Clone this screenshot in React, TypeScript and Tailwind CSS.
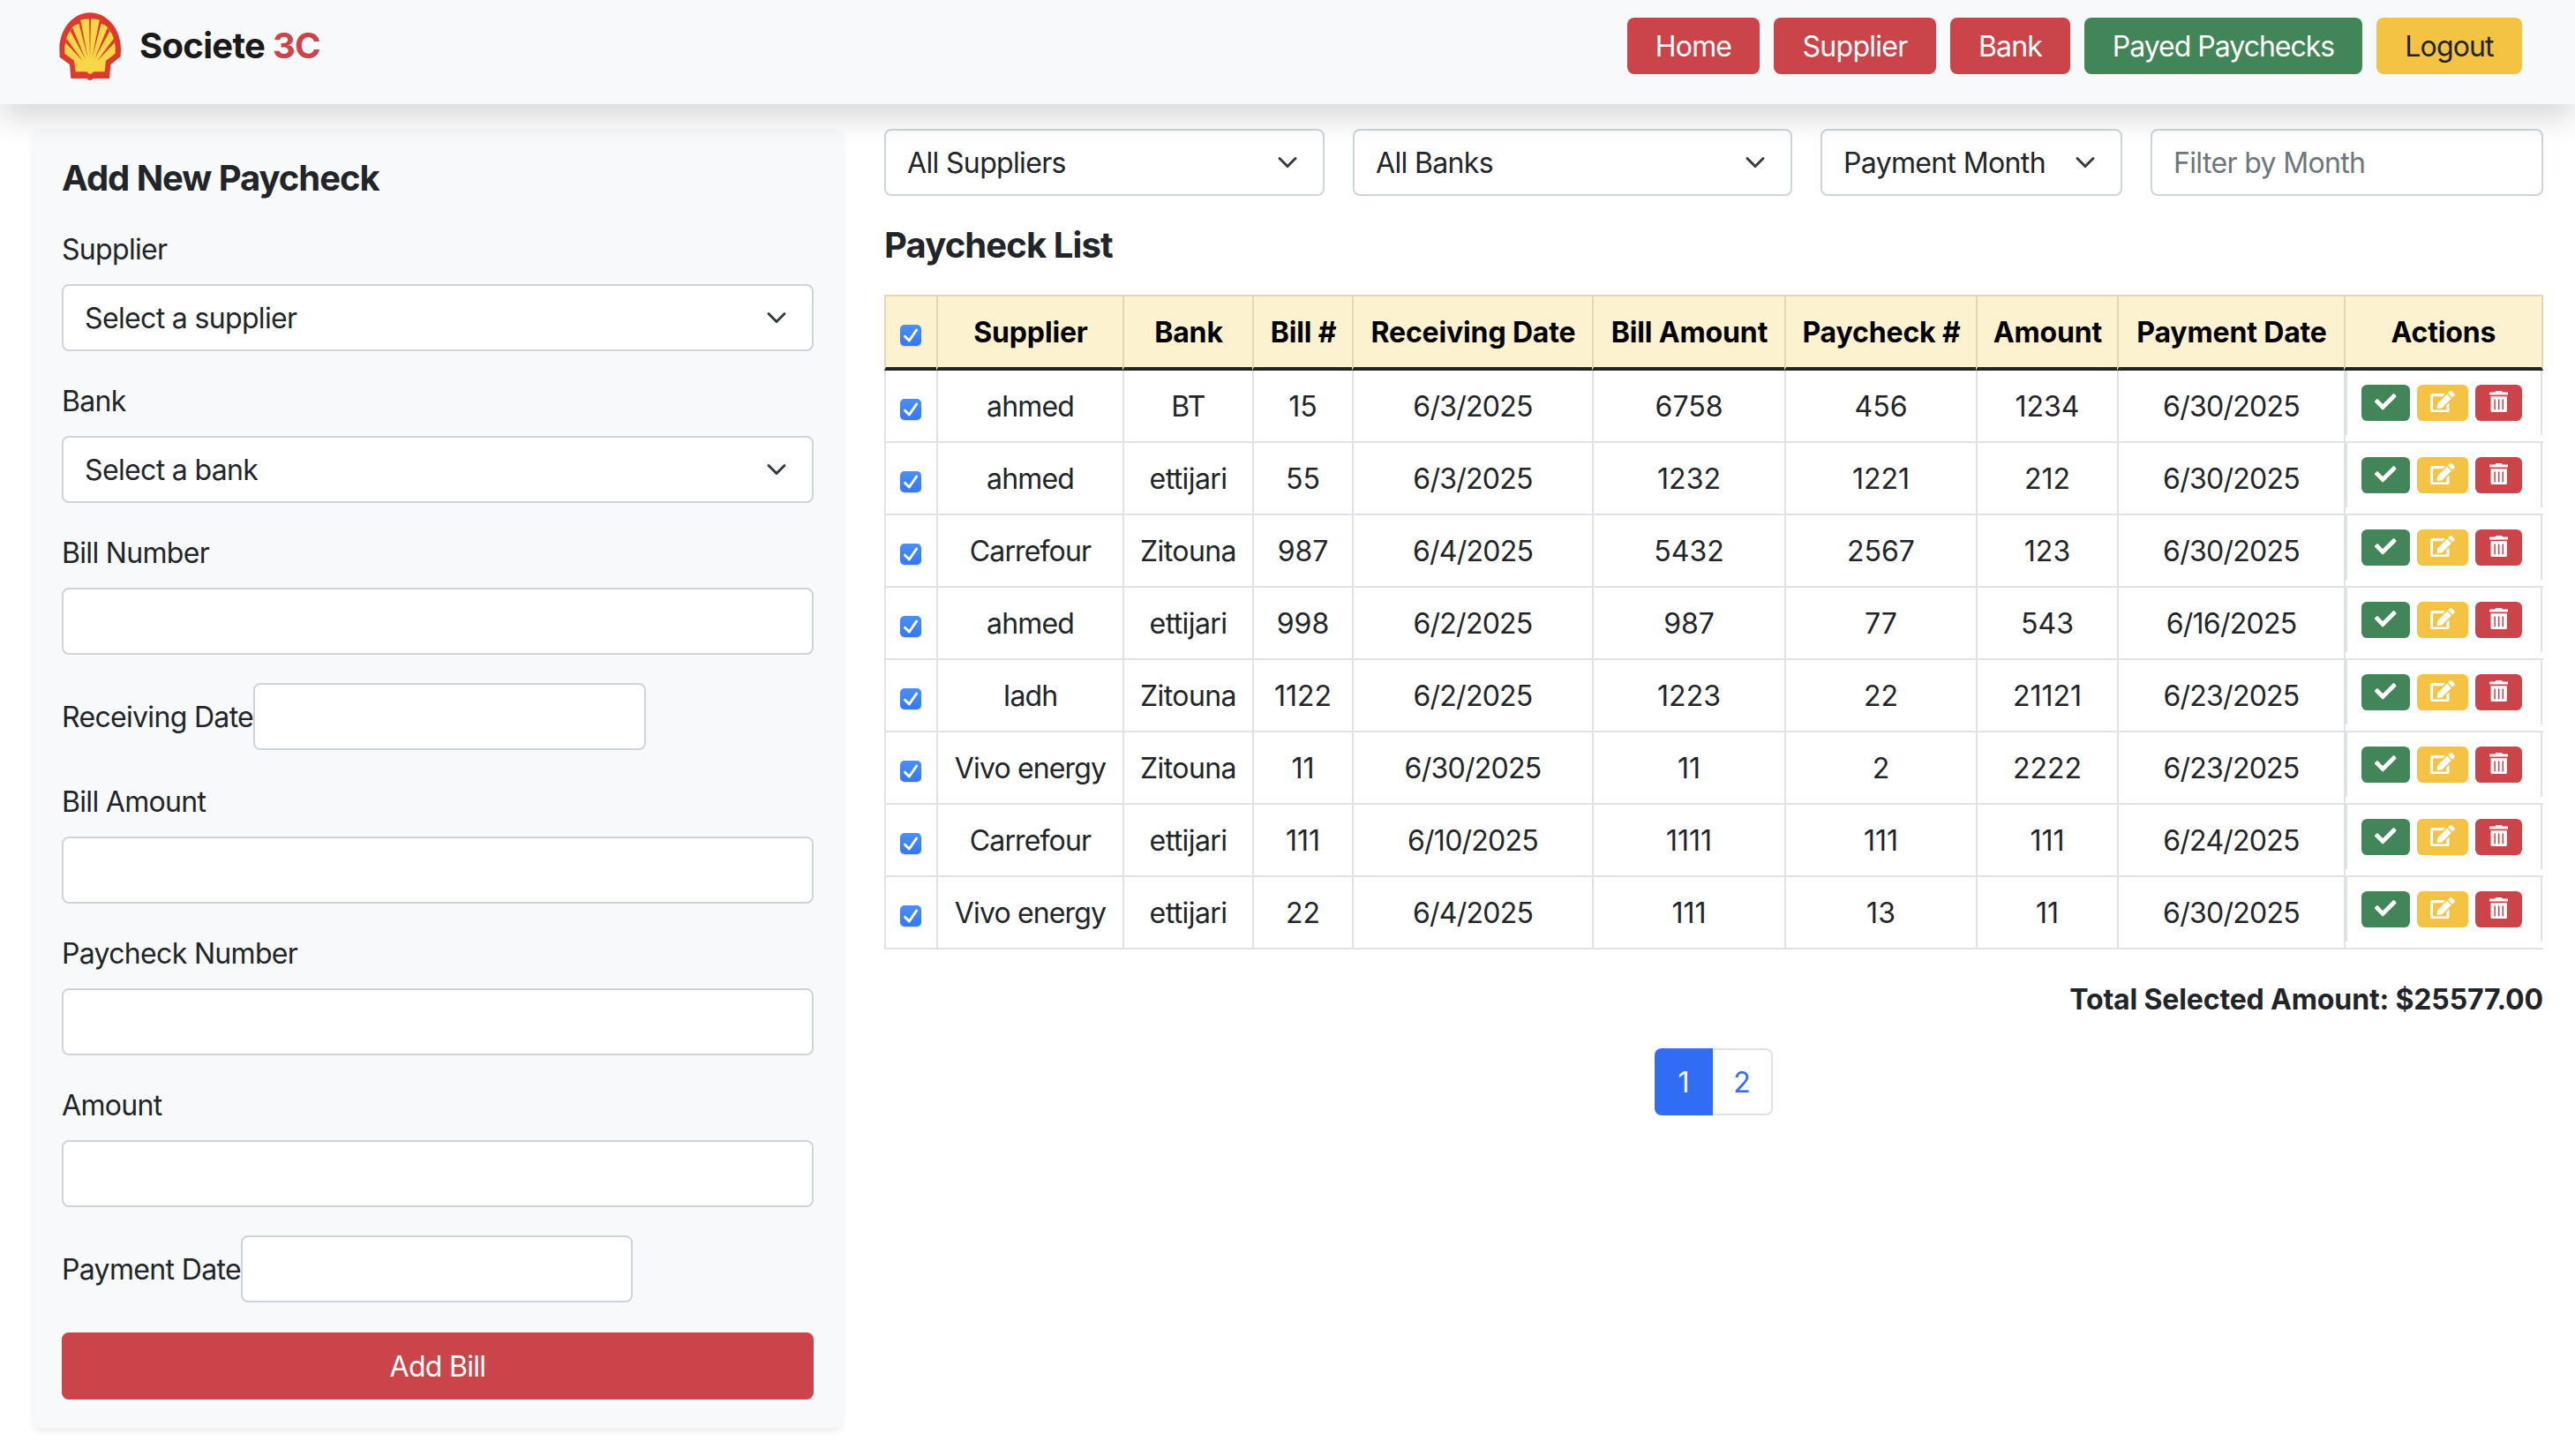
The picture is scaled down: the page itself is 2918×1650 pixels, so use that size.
import type { ReactNode } from "react";
import { FaCheck, FaEdit, FaTrashAlt } from "react-icons/fa";

type Bill = {
  supplier: string;
  bank: string;
  bill: string;
  receiving: string;
  billAmount: string;
  paycheck: string;
  amount: string;
  payment: string;
};

const row = (
  supplier: string,
  bank: string,
  bill: string,
  receiving: string,
  billAmount: string,
  paycheck: string,
  amount: string,
  payment: string,
): Bill => ({ supplier, bank, bill, receiving, billAmount, paycheck, amount, payment });

const bills: Bill[] = [
  row("ahmed", "BT", "15", "6/3/2025", "6758", "456", "1234", "6/30/2025"),
  row("ahmed", "ettijari", "55", "6/3/2025", "1232", "1221", "212", "6/30/2025"),
  row("Carrefour", "Zitouna", "987", "6/4/2025", "5432", "2567", "123", "6/30/2025"),
  row("ahmed", "ettijari", "998", "6/2/2025", "987", "77", "543", "6/16/2025"),
  row("Iadh", "Zitouna", "1122", "6/2/2025", "1223", "22", "21121", "6/23/2025"),
  row("Vivo energy", "Zitouna", "11", "6/30/2025", "11", "2", "2222", "6/23/2025"),
  row("Carrefour", "ettijari", "111", "6/10/2025", "1111", "111", "111", "6/24/2025"),
  row("Vivo energy", "ettijari", "22", "6/4/2025", "111", "13", "11", "6/30/2025"),
];

const headings = [
  "Supplier",
  "Bank",
  "Bill #",
  "Receiving Date",
  "Bill Amount",
  "Paycheck #",
  "Amount",
  "Payment Date",
];

function ShellLogo() {
  return (
    <svg viewBox="15 16 210 231" className="h-[77px] w-[70px]">
      <path
        fill="#dd3a2f"
        d="M120 16.500C178 17 225 72 225 141L224 166L190 194L186 241L131 241Q125 247 120 247Q115 247 109 241L55 241L51 194L17 168L16 141C16 72 62 17 120 16.500Z"
      />
      {/* scallop body */}
      <path
        fill="#f9d648"
        d="M120 39Q103 37 87 42L83 54Q70 57 60 66L52 80Q43 91 39 106L36 119Q32 137 34 156L66 180L71 218L109 218Q115 226 120 226Q126 226 132 218L170 218L174 180L206 156Q208 137 204 119L201 106Q197 91 188 80L180 66Q170 57 157 54L153 42Q137 37 120 39Z"
      />
      {/* grooves between the ribs */}
      <path
        fill="#dd3a2f"
        d="M117 34L123 34L120 176ZM81.500 52L87.500 41L113 172ZM53 80L60 67L105 176ZM35.500 118L39.500 105L96 182ZM158.500 52L152.500 41L127 172ZM187 80L180 67L135 176ZM204.500 118L200.500 105L144 182Z"
      />
    </svg>
  );
}

function Chevron() {
  return (
    <svg viewBox="0 0 16 16" className="h-6 w-8 shrink-0" fill="none">
      <path d="m2 5 6 6 6-6" stroke="#343a40" strokeWidth="2" strokeLinecap="round" strokeLinejoin="round" />
    </svg>
  );
}

function Select({ className = "", children }: { className?: string; children: ReactNode }) {
  return (
    <button
      className={`flex h-[76px] items-center justify-between rounded-[8px] border-2 border-[#cfd4da] bg-white px-6 text-left tracking-[-0.65px] whitespace-nowrap ${className}`}
    >
      <span className="pt-[2px]">{children}</span>
      <Chevron />
    </button>
  );
}

function Input({ className = "" }: { className?: string }) {
  return <input className={`block h-[76px] rounded-[8px] border-2 border-[#cfd4da] bg-white px-6 ${className}`} />;
}

function Field({ label, children }: { label: string; children: ReactNode }) {
  return (
    <div className="mb-8">
      <label className="mb-[15px] block pt-px tracking-[-0.68px]">{label}</label>
      {children}
    </div>
  );
}

function Checkbox() {
  return (
    <span className="ml-4 flex size-6 rounded-[5px] bg-linear-to-b from-[#4a90f8] to-[#3377f4] shadow-[0_1px_2px_rgba(0,0,0,0.15)]">
      <svg viewBox="0 0 24 24" className="size-6" fill="none">
        <path d="M5.500 13.200 10.300 18 18.600 6" stroke="#fff" strokeWidth="3" strokeLinecap="round" strokeLinejoin="round" />
      </svg>
    </span>
  );
}

const navButton = "flex h-16 items-center justify-center rounded-[8px] pt-[2px]";
const cell = "border-b-2 border-l-2 border-[#dfe2e8] p-0 text-center";
const textCell = "border-b-2 border-l-2 border-[#dfe2e8] p-0 pt-[2px] text-center";
const headCell = "border-t-2 border-b-4 border-l-2 border-t-[#e4d8b4] border-b-[#212529] border-l-[#e4d8b4] p-0";
const action = "flex h-[41px] items-center justify-center rounded-[6.4px] pb-[3px] text-white";

export default function App() {
  return (
    <div className="h-[1650px] w-[2918px] overflow-hidden bg-white font-['Inter',sans-serif] text-[32px] leading-[48px] text-[#212529]">
      <header className="relative z-10 flex h-[118px] items-center justify-between bg-[#f8f9fb] pr-[60px] pb-[14px] pl-[67px] shadow-[0_16px_32px_rgba(0,0,0,0.15)]">
        <div className="flex items-center">
          <ShellLogo />
          <span className="ml-[21px] text-[40px] leading-[60px] font-bold tracking-[-0.7px] text-[#1a1a1a]">
            Societe <span className="text-[#cb444a]">3C</span>
          </span>
        </div>
        <nav className="flex gap-4">
          <button className={`${navButton} w-[150px] bg-[#cb444a] tracking-[-0.85px] text-white`}>Home</button>
          <button className={`${navButton} w-[184px] bg-[#cb444a] tracking-[-0.75px] text-white`}>Supplier</button>
          <button className={`${navButton} w-[136px] bg-[#cb444a] tracking-[-0.85px] text-white`}>Bank</button>
          <button className={`${navButton} w-[315px] bg-[#428558] tracking-[-1px] text-white`}>Payed Paychecks</button>
          <button className={`${navButton} w-[165px] bg-[#f4c343] tracking-[-0.85px]`}>Logout</button>
        </nav>
      </header>

      <main className="flex items-start pt-7 pl-[38px]">
        <form className="w-[916px] rounded-[8px] bg-[#f8f9fb] p-8 shadow-[0_4px_8px_rgba(0,0,0,0.075)]">
          <h4 className="mb-8 text-[40px] leading-[48px] font-bold tracking-[-1.05px]">Add New Paycheck</h4>
          <Field label="Supplier">
            <Select className="w-full">Select a supplier</Select>
          </Field>
          <Field label="Bank">
            <Select className="w-full">Select a bank</Select>
          </Field>
          <Field label="Bill Number">
            <Input className="w-full" />
          </Field>
          <div className="mb-[34px] flex items-center">
            <label className="w-[217px] pt-[2px] tracking-[-0.68px] whitespace-nowrap">Receiving Date</label>
            <Input className="w-[445px]" />
          </div>
          <Field label="Bill Amount">
            <Input className="w-full" />
          </Field>
          <Field label="Paycheck Number">
            <Input className="w-full" />
          </Field>
          <Field label="Amount">
            <Input className="w-full" />
          </Field>
          <div className="mb-[34px] flex items-center">
            <label className="w-[203px] pt-[2px] tracking-[-0.66px] whitespace-nowrap">Payment Date</label>
            <Input className="w-[444px]" />
          </div>
          <button className="block h-[76px] w-full rounded-[8px] bg-[#cb444a] pt-[2px] tracking-[-0.7px] text-white">
            Add Bill
          </button>
        </form>

        <section className="ml-12 w-[1880px]">
          <div className="mb-8 flex">
            <Select className="mr-8 w-[499px]">All Suppliers</Select>
            <Select className="mr-8 w-[498px]">All Banks</Select>
            <Select className="mr-8 w-[342px]">Payment Month</Select>
            <input
              placeholder="Filter by Month"
              className="h-[76px] w-[445px] rounded-[8px] border-2 border-[#cfd4da] bg-white px-6 pt-px tracking-[-0.65px] placeholder:text-[#6d757d]"
            />
          </div>
          <h4 className="mb-8 text-[40px] leading-[48px] font-bold tracking-[-0.88px]">Paycheck List</h4>

          <table className="w-[1880px] table-fixed border-separate border-spacing-0">
            <colgroup>
              <col className="w-[59px]" />
              <col className="w-[211px]" />
              <col className="w-[147px]" />
              <col className="w-[113px]" />
              <col className="w-[272px]" />
              <col className="w-[218px]" />
              <col className="w-[217px]" />
              <col className="w-[160px]" />
              <col className="w-[257px]" />
              <col className="w-[226px]" />
            </colgroup>
            <thead>
              <tr className="h-[86px] bg-[#fdf2d0] text-black">
                <th className={`${headCell} align-top`}>
                  <div className="pt-8">
                    <Checkbox />
                  </div>
                </th>
                {headings.map((h) => (
                  <th key={h} className={`${headCell} pt-[2px]! pl-px! font-bold tracking-[-0.15px] whitespace-nowrap`}>
                    {h}
                  </th>
                ))}
                <th className={`${headCell} border-r-2 border-r-[#e4d8b4] pt-[2px]! font-bold tracking-[-0.15px]`}>
                  Actions
                </th>
              </tr>
            </thead>
            <tbody>
              {bills.map((b, i) => (
                <tr key={i} className="h-[82px]">
                  <td className={`${cell} align-top`}>
                    <div className="pt-8">
                      <Checkbox />
                    </div>
                  </td>
                  <td className={`${textCell} tracking-[-0.85px]`}>{b.supplier}</td>
                  <td className={`${textCell} tracking-[-0.6px]`}>{b.bank}</td>
                  <td className={textCell}>{b.bill}</td>
                  <td className={`${textCell} tracking-[-0.75px]`}>{b.receiving}</td>
                  <td className={textCell}>{b.billAmount}</td>
                  <td className={textCell}>{b.paycheck}</td>
                  <td className={textCell}>{b.amount}</td>
                  <td className={`${textCell} tracking-[-0.75px]`}>{b.payment}</td>
                  <td className={`${cell} align-top`}>
                    <div className="flex h-[73px] w-[223px] gap-2 border-x-2 border-[#dfe2e8] px-4 pt-4 text-[24.5px]">
                      <button className={`${action} w-[55px] bg-[#428558]`}>
                        <FaCheck />
                      </button>
                      <button className={`${action} w-[58px] bg-[#f4c343]`}>
                        <FaEdit className="h-[24.5px] w-[27.6px]" />
                      </button>
                      <button className={`${action} w-[53px] bg-[#cb444a]`}>
                        <FaTrashAlt className="h-[24.5px] w-[21.4px]" />
                      </button>
                    </div>
                  </td>
                </tr>
              ))}
            </tbody>
          </table>

          <p className="mt-[33px] text-right font-bold tracking-[-0.14px]">Total Selected Amount: $25577.00</p>

          <div className="mt-[31px] flex justify-center">
            <button className="h-[76px] w-[66px] rounded-l-[8px] bg-[#316cf4] pt-[2px] text-white">1</button>
            <button className="h-[76px] w-[68px] rounded-r-[8px] border-2 border-l-0 border-[#dfe2e6] bg-white pt-[2px] text-[#316cf4]">
              2
            </button>
          </div>
        </section>
      </main>
    </div>
  );
}
